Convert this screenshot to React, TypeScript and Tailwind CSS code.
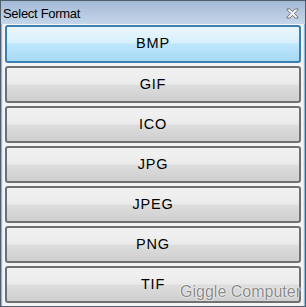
import React from "react";

const formats = ["BMP", "GIF", "ICO", "JPG", "JPEG", "PNG", "TIF"];

const FormatButton: React.FC<{ label: string; active?: boolean }> = ({ label, active }) => {
    return (
        <div
            className={
                active
                    ? "h-[38px] shrink-0 flex items-center justify-center rounded-[3px] border-2 border-[#3c7fb1] bg-[linear-gradient(#eaf6fd_0%,#d9f0fc_45%,#bee6fd_50%,#a7d9f5_100%)] text-[14.5px] tracking-[0.8px] text-black"
                    : "h-[37px] shrink-0 flex items-center justify-center rounded-[3px] border-2 border-[#707070] bg-[linear-gradient(#f2f2f2_0%,#ebebeb_48%,#dddddd_52%,#cfcfcf_100%)] text-[14.5px] tracking-[0.8px] text-black"
            }
        >
            {label}
        </div>
    );
};

const App: React.FC = () => {
    return (
        <div className="w-[306px] h-[307px] relative overflow-hidden border border-[#4f5f70] bg-[#8cb8dc] font-['Liberation_Sans',sans-serif]">
            <div className="h-[23px] flex items-center justify-between pl-[2px] pr-[6px] pt-[2px] bg-[linear-gradient(#a3b9d5,#c6d6ea)]">
                <span className="text-[13px] tracking-[-0.3px] text-black">Select Format</span>
                <svg width="13" height="11" viewBox="0 0 14 12">
                    <path
                        d="M1 1 L4 1 L7 4 L10 1 L13 1 L13 2 L9 6 L13 10 L13 11 L10 11 L7 8 L4 11 L1 11 L1 10 L5 6 L1 2 Z"
                        fill="#f4f4f4"
                        stroke="#6a6a6a"
                        strokeWidth="1"
                    />
                </svg>
            </div>
            <div className="h-[282px] mx-[1px] flex flex-col gap-[3px] bg-[#f4f4f4] px-[2px] pt-[1px] border-x border-[#dde8f2]">
                {formats.map((f, i) => (
                    <FormatButton key={f} label={f} active={i === 0} />
                ))}
            </div>
            <div className="absolute right-[4px] bottom-[2px] text-[16px] text-[#8a8a8a] [text-shadow:0_0_1px_#fff,0_0_1px_#fff,0_0_2px_#fff]">
                Giggle Computer
            </div>
        </div>
    );
};

export default App;
